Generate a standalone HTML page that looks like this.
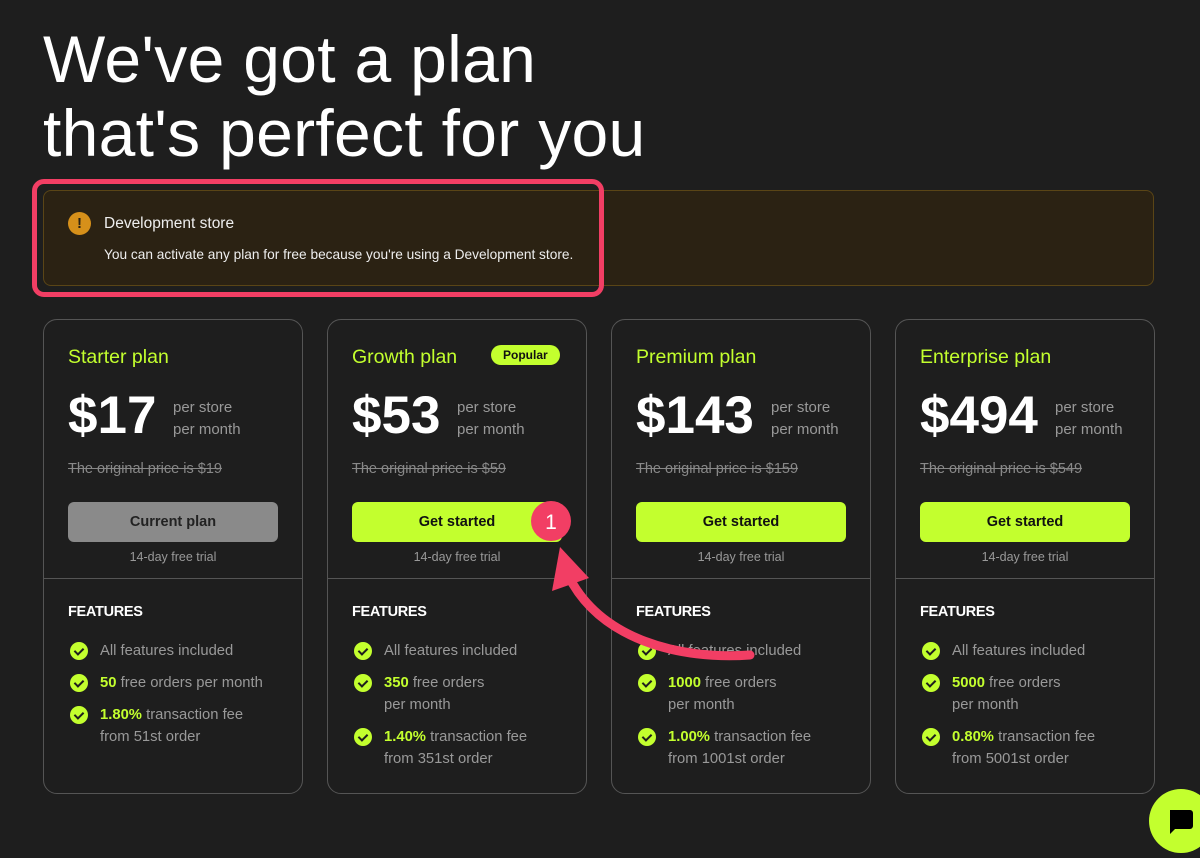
<!DOCTYPE html>
<html><head><style>
body{margin:0;background:#1e1e1e;width:1200px;height:850px;overflow:hidden;font-family:"Liberation Sans",sans-serif;color:#fff;position:relative}
h1{position:absolute;left:43px;top:22px;margin:0;font-weight:400;font-size:66px;line-height:74px;letter-spacing:0.3px}
.banner{position:absolute;left:43px;top:190px;width:1111px;height:96px;background:#2b2213;border:1px solid #5a4516;border-radius:8px;box-sizing:border-box}
.hl{position:absolute;left:32px;top:179px;width:572px;height:118px;border:5px solid #f23e64;border-radius:12px;box-sizing:border-box}
.warn{position:absolute;left:68px;top:212px;width:23px;height:23px;border-radius:50%;background:#d6901a;color:#2b2213;font-weight:700;font-size:15px;text-align:center;line-height:23px}
.bt{position:absolute;left:104px;top:215px;font-size:15.5px;color:#eee}
.bd{position:absolute;left:104px;top:247px;font-size:13.7px;color:#eee}
.card{position:absolute;top:319px;width:260px;height:475px;border:1px solid #555;border-radius:14px;box-sizing:border-box}
.card .div{position:absolute;left:0;right:0;top:258px;border-top:1px solid #555}
.name{position:absolute;left:24px;top:26px;font-size:19.5px;color:#c3ff2e}
.pop{position:absolute;left:163px;top:25px;background:#c3ff2e;color:#111;font-weight:700;font-size:12px;border-radius:10px;padding:3px 12px}
.price{position:absolute;left:24px;top:65px;font-size:53px;font-weight:700}
.per{position:absolute;top:77px;font-size:15px;color:#999;line-height:22px}
.orig{position:absolute;left:24px;top:141px;font-size:14.5px;color:#888;text-decoration:line-through}
.btn{position:absolute;left:24px;top:182px;width:210px;height:40px;border-radius:6px;background:#c3ff2e;color:#111;font-weight:700;font-size:14.5px;text-align:center;line-height:40px}
.btn.cur{background:#8a8a8a;color:#222}
.trial{position:absolute;left:0;width:258px;top:230px;text-align:center;font-size:12.5px;color:#999}
.feat{position:absolute;left:24px;top:284px;font-weight:700;font-size:14.5px;letter-spacing:-0.3px}
ul{position:absolute;left:24px;top:320px;margin:0;padding:0;list-style:none;width:200px}
li{position:relative;padding-left:32px;font-size:14.8px;color:#999;line-height:22px;margin-bottom:10px}
li b{color:#c3ff2e}
li:before{content:"";position:absolute;left:2px;top:2px;width:18px;height:18px;border-radius:50%;background:#c3ff2e}
li:after{content:"";position:absolute;left:8px;top:6px;width:4px;height:7px;border:solid #1e1e1e;border-width:0 2px 2px 0;transform:rotate(45deg)}
.chat{position:absolute;left:1149px;top:789px;width:64px;height:64px;border-radius:50%;background:#c3ff2e}
</style></head><body>
<h1>We've got a plan<br>that's perfect for you</h1>
<div class="banner"></div>
<div class="warn">!</div>
<div class="bt">Development store</div>
<div class="bd">You can activate any plan for free because you're using a Development store.</div>
<div class="hl"></div>

<div class="card" style="left:43px"><div class="name">Starter plan</div><div class="price">$17</div><div class="per" style="left:129px">per store<br>per month</div><div class="orig">The original price is $19</div><div class="btn cur">Current plan</div><div class="trial">14-day free trial</div><div class="div"></div><div class="feat">FEATURES</div>
<ul><li>All features included</li><li style="white-space:nowrap"><b>50</b> free orders per month</li><li><b>1.80%</b> transaction fee<br>from 51st order</li></ul></div>

<div class="card" style="left:327px"><div class="name">Growth plan</div><div class="pop">Popular</div><div class="price">$53</div><div class="per" style="left:129px">per store<br>per month</div><div class="orig">The original price is $59</div><div class="btn">Get started</div><div class="trial">14-day free trial</div><div class="div"></div><div class="feat">FEATURES</div>
<ul><li>All features included</li><li><b>350</b> free orders<br>per month</li><li><b>1.40%</b> transaction fee<br>from 351st order</li></ul></div>

<div class="card" style="left:611px"><div class="name">Premium plan</div><div class="price">$143</div><div class="per" style="left:159px">per store<br>per month</div><div class="orig">The original price is $159</div><div class="btn">Get started</div><div class="trial">14-day free trial</div><div class="div"></div><div class="feat">FEATURES</div>
<ul><li>All features included</li><li><b>1000</b> free orders<br>per month</li><li><b>1.00%</b> transaction fee<br>from 1001st order</li></ul></div>

<div class="card" style="left:895px"><div class="name">Enterprise plan</div><div class="price">$494</div><div class="per" style="left:159px">per store<br>per month</div><div class="orig">The original price is $549</div><div class="btn">Get started</div><div class="trial">14-day free trial</div><div class="div"></div><div class="feat">FEATURES</div>
<ul><li>All features included</li><li><b>5000</b> free orders<br>per month</li><li><b>0.80%</b> transaction fee<br>from 5001st order</li></ul></div>

<svg style="position:absolute;left:0;top:0" width="1200" height="850">
<circle cx="551" cy="521" r="20" fill="#f23e64"/>
<text x="551" y="529" fill="#fff" font-family="Liberation Sans" font-size="21" text-anchor="middle">1</text>
<path d="M750 655 C680 660 600 640 568 575" stroke="#f23e64" stroke-width="9" fill="none" stroke-linecap="round"/>
<path d="M560 547 L552 591 L589 578 Z" fill="#f23e64"/>
</svg>
<div class="chat"><svg width="64" height="64"><path d="M21 21 h20 a3 3 0 0 1 3 3 v13 a3 3 0 0 1 -3 3 h-15 l-5 5 z" fill="#000"/></svg></div>
</body></html>
